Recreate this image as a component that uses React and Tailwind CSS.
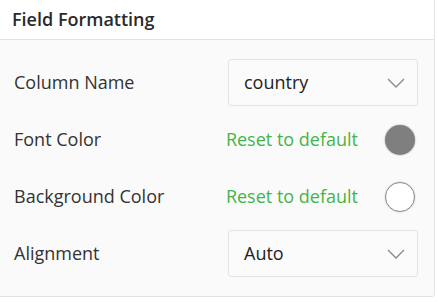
import React from 'react';

const Chevron = () => (
  <svg width="18" height="10" viewBox="0 0 18 10" fill="none" className="text-[#8a8a8a]">
    <path d="M1 1l8 8 8-8" stroke="currentColor" strokeWidth="1.4" />
  </svg>
);

const Select = ({ value }) => (
  <div className="flex h-[47px] w-[190px] items-center justify-between rounded-[3px] border border-[#e4e4e4] bg-[#fbfbfb] pl-[15px] pr-[12px]">
    <span className="text-[18px] text-[#222]">{value}</span>
    <Chevron />
  </div>
);

const ColorPick = ({ filled }) => (
  <div className="mr-[3px] flex items-center">
    <span className="text-[18px] text-[#43b549]">Reset to default</span>
    <div
      className={
        filled
          ? 'ml-[27px] h-[30px] w-[30px] rounded-full bg-[#7f7f7f] shadow-[0_0_2px_rgba(0,0,0,0.35)]'
          : 'ml-[27px] h-[30px] w-[30px] rounded-full border border-[#8a8a8a] bg-white shadow-[0_0_2px_rgba(0,0,0,0.2)]'
      }
    />
  </div>
);

const Row = ({ label, children }) => (
  <div className="flex h-[57px] items-center justify-between">
    <span className="text-[18px] text-[#333]">{label}</span>
    {children}
  </div>
);

export default function App() {
  return (
    <div className="h-[302px] w-[438px] bg-white" style={{ fontFamily: '"Open Sans", sans-serif' }}>
      <div className="h-[297px] w-[435px] overflow-hidden rounded-br-[4px] border-r border-b border-[#e3e3e3]">
        <div className="flex h-[40px] items-center border-b border-[#e3e3e3] bg-white px-[12px]">
          <span className="text-[18px] font-semibold text-[#2a2a2a]">Field Formatting</span>
        </div>
        <div className="h-[256px] bg-[#fafafa] pl-[14px] pr-[16px] pt-[14px]">
          <Row label="Column Name">
            <Select value="country" />
          </Row>
          <Row label="Font Color">
            <ColorPick filled />
          </Row>
          <Row label="Background Color">
            <ColorPick />
          </Row>
          <Row label="Alignment">
            <Select value="Auto" />
          </Row>
        </div>
      </div>
    </div>
  );
}
